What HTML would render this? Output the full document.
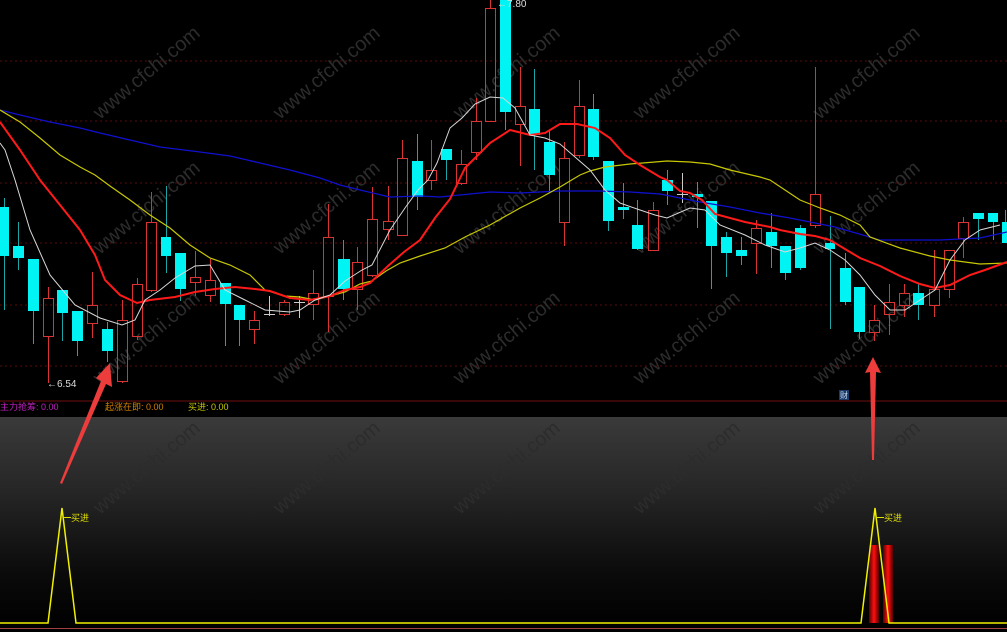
<!DOCTYPE html>
<html><head><meta charset="utf-8"><style>
html,body{margin:0;padding:0;background:#000;width:1007px;height:632px;overflow:hidden}
.t{font-family:"Liberation Sans","Noto Sans CJK SC",sans-serif}
</style></head><body>
<svg width="1007" height="632" xmlns="http://www.w3.org/2000/svg" class="t">
<defs>
<linearGradient id="bg" x1="0" y1="0" x2="0" y2="1">
<stop offset="0" stop-color="#3a3a3a"/><stop offset="0.35" stop-color="#262626"/><stop offset="0.75" stop-color="#0a0a0a"/><stop offset="1" stop-color="#000"/></linearGradient>
<linearGradient id="rb" x1="0" y1="0" x2="1" y2="0">
<stop offset="0" stop-color="#500"/><stop offset="0.5" stop-color="#ff1010"/><stop offset="1" stop-color="#500"/></linearGradient>
</defs>
<rect width="1007" height="632" fill="#000"/>
<rect x="0" y="417" width="1007" height="211" fill="url(#bg)"/>
<g stroke="#5a0a0a" stroke-dasharray="2,3" stroke-width="1">
<line x1="0" y1="61" x2="1007" y2="61"/><line x1="0" y1="121" x2="1007" y2="121"/><line x1="0" y1="183" x2="1007" y2="183"/><line x1="0" y1="243" x2="1007" y2="243"/><line x1="0" y1="305" x2="1007" y2="305"/><line x1="0" y1="366" x2="1007" y2="366"/>
</g>
<line x1="0" y1="401" x2="1007" y2="401" stroke="#701010"/>
<line x1="0" y1="628.5" x2="1007" y2="628.5" stroke="#a04040"/>
<!-- watermarks -->
<g fill="#2c2c2c" font-size="20">
<text transform="translate(100,120) rotate(-40)">www.cfchi.com</text>
<text transform="translate(280,120) rotate(-40)">www.cfchi.com</text>
<text transform="translate(460,120) rotate(-40)">www.cfchi.com</text>
<text transform="translate(640,120) rotate(-40)">www.cfchi.com</text>
<text transform="translate(820,120) rotate(-40)">www.cfchi.com</text>
<text transform="translate(100,255) rotate(-40)">www.cfchi.com</text>
<text transform="translate(280,255) rotate(-40)">www.cfchi.com</text>
<text transform="translate(460,255) rotate(-40)">www.cfchi.com</text>
<text transform="translate(640,255) rotate(-40)">www.cfchi.com</text>
<text transform="translate(820,255) rotate(-40)">www.cfchi.com</text>
<text transform="translate(100,385) rotate(-40)">www.cfchi.com</text>
<text transform="translate(280,385) rotate(-40)">www.cfchi.com</text>
<text transform="translate(460,385) rotate(-40)">www.cfchi.com</text>
<text transform="translate(640,385) rotate(-40)">www.cfchi.com</text>
<text transform="translate(820,385) rotate(-40)">www.cfchi.com</text>
<text transform="translate(100,515) rotate(-40)">www.cfchi.com</text>
<text transform="translate(280,515) rotate(-40)">www.cfchi.com</text>
<text transform="translate(460,515) rotate(-40)">www.cfchi.com</text>
<text transform="translate(640,515) rotate(-40)">www.cfchi.com</text>
<text transform="translate(820,515) rotate(-40)">www.cfchi.com</text>
</g>
<!-- cyan wicks -->
<g stroke="#1aa6a6" stroke-width="1">
<line x1="4.5" y1="198" x2="4.5" y2="310"/><line x1="18.5" y1="222" x2="18.5" y2="270"/><line x1="33.5" y1="259" x2="33.5" y2="344"/><line x1="62.5" y1="290" x2="62.5" y2="341"/><line x1="77.5" y1="311" x2="77.5" y2="356"/><line x1="107.5" y1="322" x2="107.5" y2="362"/><line x1="166.5" y1="186" x2="166.5" y2="273"/><line x1="180.5" y1="253" x2="180.5" y2="301"/><line x1="225.5" y1="283" x2="225.5" y2="346"/><line x1="239.5" y1="305" x2="239.5" y2="346"/><line x1="343.5" y1="240" x2="343.5" y2="300"/><line x1="417.5" y1="134" x2="417.5" y2="210"/><line x1="446.5" y1="149" x2="446.5" y2="180"/><line x1="505.5" y1="0" x2="505.5" y2="130"/><line x1="534.5" y1="69" x2="534.5" y2="170"/><line x1="549.5" y1="131" x2="549.5" y2="193"/><line x1="593.5" y1="94" x2="593.5" y2="160"/><line x1="608.5" y1="161" x2="608.5" y2="231"/><line x1="623.5" y1="183" x2="623.5" y2="219"/><line x1="637.5" y1="200" x2="637.5" y2="250"/><line x1="667.5" y1="170" x2="667.5" y2="205"/><line x1="697.5" y1="182" x2="697.5" y2="228"/><line x1="711.5" y1="201" x2="711.5" y2="289"/><line x1="726.5" y1="232" x2="726.5" y2="277"/><line x1="741.5" y1="237" x2="741.5" y2="265"/><line x1="771.5" y1="213" x2="771.5" y2="268"/><line x1="785.5" y1="246" x2="785.5" y2="280"/><line x1="800.5" y1="225" x2="800.5" y2="270"/><line x1="830.5" y1="216" x2="830.5" y2="329"/><line x1="845.5" y1="253" x2="845.5" y2="305"/><line x1="859.5" y1="287" x2="859.5" y2="339"/><line x1="918.5" y1="284" x2="918.5" y2="320"/><line x1="978.5" y1="213" x2="978.5" y2="240"/><line x1="993.5" y1="213" x2="993.5" y2="240"/><line x1="1005.5" y1="210" x2="1005.5" y2="243"/>
</g>
<g fill="#00f4f4">
<rect x="0" y="207" width="9" height="49"/><rect x="13" y="246" width="11" height="12"/><rect x="28" y="259" width="11" height="52"/><rect x="57" y="290" width="11" height="23"/><rect x="72" y="311" width="11" height="30"/><rect x="102" y="329" width="11" height="22"/><rect x="161" y="237" width="10" height="19"/><rect x="175" y="253" width="11" height="36"/><rect x="220" y="283" width="11" height="21"/><rect x="234" y="305" width="11" height="15"/><rect x="338" y="259" width="12" height="30"/><rect x="412" y="161" width="11" height="36"/><rect x="441" y="149" width="11" height="11"/><rect x="500" y="0" width="11" height="112"/><rect x="529" y="109" width="11" height="26"/><rect x="544" y="142" width="11" height="33"/><rect x="588" y="109" width="11" height="48"/><rect x="603" y="161" width="11" height="60"/><rect x="618" y="207" width="11" height="3"/><rect x="632" y="225" width="11" height="24"/><rect x="662" y="180" width="11" height="11"/><rect x="692" y="194" width="11" height="3"/><rect x="706" y="201" width="11" height="45"/><rect x="721" y="237" width="11" height="16"/><rect x="736" y="250" width="11" height="6"/><rect x="766" y="232" width="11" height="14"/><rect x="780" y="246" width="11" height="27"/><rect x="795" y="228" width="11" height="40"/><rect x="825" y="243" width="10" height="6"/><rect x="840" y="268" width="11" height="34"/><rect x="854" y="287" width="11" height="45"/><rect x="913" y="293" width="11" height="12"/><rect x="973" y="213" width="11" height="6"/><rect x="988" y="213" width="10" height="9"/><rect x="1002" y="222" width="5" height="21"/>
</g>
<!-- red candles -->
<g stroke="#d93333" stroke-width="1" fill="none">
<path d="M48.5 287V298M48.5 336V383M92.5 272V305M92.5 323V338M122.5 300V320M122.5 381V383M137.5 278V284M137.5 336V340M151.5 192V222M151.5 290V292M195.5 251V277M195.5 282V296M210.5 259V280M210.5 295V302M254.5 311V320M254.5 329V344M284.5 300V302M284.5 314V316M313.5 270V293M313.5 304V320M328.5 204V237M328.5 296V332M357.5 247V262M357.5 289V310M372.5 187V219M372.5 275V277M388.5 186V221M388.5 229V240M402.5 140V158M402.5 235V236M431.5 140V170M431.5 180V190M461.5 150V164M461.5 183V185M476.5 98V121M476.5 152V160M490.5 0V8M520.5 67V106M520.5 124V166M564.5 142V158M564.5 222V246M579.5 80V106M579.5 155V158M653.5 202V210M756.5 220V228M756.5 243V274M815.5 67V194M815.5 225V228M874.5 305V320M874.5 332V341M889.5 284V302M889.5 314V335M904.5 284V293M904.5 305V317M934.5 250V289M934.5 305V317M949.5 289V298M963.5 217V222M963.5 238V258"/>
<rect x="43.5" y="298.5" width="10" height="38"/><rect x="87.5" y="305.5" width="10" height="18"/><rect x="117.5" y="320.5" width="10" height="61"/><rect x="132.5" y="284.5" width="10" height="52"/><rect x="146.5" y="222.5" width="10" height="68"/><rect x="190.5" y="277.5" width="10" height="5"/><rect x="205.5" y="280.5" width="10" height="15"/><rect x="249.5" y="320.5" width="10" height="9"/><rect x="279.5" y="302.5" width="10" height="12"/><rect x="308.5" y="293.5" width="10" height="11"/><rect x="323.5" y="237.5" width="10" height="59"/><rect x="352.5" y="262.5" width="10" height="27"/><rect x="367.5" y="219.5" width="10" height="56"/><rect x="383.5" y="221.5" width="10" height="8"/><rect x="397.5" y="158.5" width="10" height="77"/><rect x="426.5" y="170.5" width="10" height="10"/><rect x="456.5" y="164.5" width="10" height="19"/><rect x="471.5" y="121.5" width="10" height="31"/><rect x="485.5" y="8.5" width="10" height="113"/><rect x="515.5" y="106.5" width="10" height="18"/><rect x="559.5" y="158.5" width="10" height="64"/><rect x="574.5" y="106.5" width="10" height="49"/><rect x="648.5" y="210.5" width="10" height="40"/><rect x="751.5" y="228.5" width="10" height="15"/><rect x="810.5" y="194.5" width="10" height="31"/><rect x="869.5" y="320.5" width="10" height="12"/><rect x="884.5" y="302.5" width="10" height="12"/><rect x="899.5" y="293.5" width="10" height="12"/><rect x="929.5" y="289.5" width="10" height="16"/><rect x="944.5" y="250.5" width="10" height="39"/><rect x="958.5" y="222.5" width="10" height="16"/>
</g>
<g stroke="#ccc" stroke-width="1">
<path d="M269.5 296V316M264 314.5H275M299.5 296V318M294 302.5H305M682.5 173V203M677 194.5H688"/>
</g>
<!-- MAs -->
<polyline fill="none" stroke="#1010d0" stroke-width="1.3" points="0,110 20,115 50,122 80,128 100,133 130,140 160,147 200,152 230,156 260,163 290,170 320,178 340,185 360,190 390,197 420,196 440,197 470,194 490,192 520,193 560,191 600,191 630,192 660,194 680,198 700,202 730,207 760,213 790,218 810,222 835,227 880,240 940,240 980,238 1007,232"/>
<polyline fill="none" stroke="#c8c800" stroke-width="1.2" points="0,110 20,122 40,138 60,155 80,167 95,175 110,186 130,200 150,215 170,228 190,245 210,258 230,265 250,275 265,290 285,296 300,297 315,300 330,296 345,292 360,284 372,281 386,271 400,263 420,256 445,248 465,237 490,225 520,208 540,198 560,187 580,175 590,171 605,167 630,164 667,161 690,162 710,164 730,170 760,177 770,180 785,190 800,200 820,208 840,215 860,225 870,237 900,248 930,256 950,260 980,264 1007,263"/>
<polyline fill="none" stroke="#ff1a1a" stroke-width="2" points="0,122 20,150 40,180 60,205 80,230 95,255 105,280 120,295 137,303 150,300 175,297 195,292 215,289 235,287 255,289 270,291 290,298 310,300 330,296 345,290 360,287 370,283 388,266 404,252 420,240 435,218 450,199 465,168 490,143 510,130 530,135 545,133 560,124 577,124 595,128 610,138 625,155 640,165 660,177 667,180 680,191 690,193 702,200 715,214 745,222 770,227 780,230 800,234 815,236 830,240 860,258 880,266 900,276 920,284 935,288 950,285 970,275 985,270 1007,262"/>
<polyline fill="none" stroke="#d8d8d8" stroke-width="1" points="0,143 5,150 15,180 30,230 50,275 75,305 100,318 122,325 135,320 145,300 160,290 175,278 195,266 210,265 225,290 245,300 265,310 290,312 300,310 315,300 330,295 345,281 362,270 372,265 390,230 405,208 418,190 428,180 437,163 450,128 462,118 475,104 490,97 503,98 515,108 530,135 545,138 560,144 575,157 590,170 605,190 620,203 640,210 655,215 667,218 690,208 705,210 720,225 745,235 765,245 785,252 800,248 815,243 830,250 845,260 860,275 875,295 890,310 905,310 920,300 935,290 950,260 965,240 980,230 1000,225"/>
<!-- labels -->
<text x="497" y="7" font-size="10" fill="#ddd">←7.80</text>
<text x="47" y="387" font-size="10" fill="#ddd">←6.54</text>
<rect x="839" y="390" width="10" height="10" fill="#1a3a6a"/><text x="840" y="398" font-size="8" fill="#cde">财</text>
<text x="0" y="410" font-size="9" fill="#c020c0">主力抢筹: 0.00</text>
<text x="105" y="410" font-size="9" fill="#d08000">起涨在即: 0.00</text>
<text x="188" y="410" font-size="9" fill="#c8c800">买进: 0.00</text>
<!-- bottom -->
<rect x="869" y="545" width="10" height="78" fill="url(#rb)"/>
<rect x="883" y="545" width="10" height="78" fill="url(#rb)"/>
<polyline fill="none" stroke="#f0f000" stroke-width="1.5" points="0,623 48,623 62,508 76,623 861,623 875,508 889,623 1007,623"/>
<line x1="64" y1="517.5" x2="71" y2="517.5" stroke="#e0e000"/><line x1="877" y1="517.5" x2="884" y2="517.5" stroke="#e0e000"/>
<text x="71" y="521" font-size="9" fill="#e0e000">买进</text>
<text x="884" y="521" font-size="9" fill="#e0e000">买进</text>
<!-- arrows -->
<polygon fill="#ec3c3c" points="110,363 112,387 106,384 62,484 60,483 101,381 96,378"/>
<polygon fill="#ec3c3c" points="873,357 881,373 876,372 874,460 872,460 870,372 865,373"/>
</svg>
</body></html>
